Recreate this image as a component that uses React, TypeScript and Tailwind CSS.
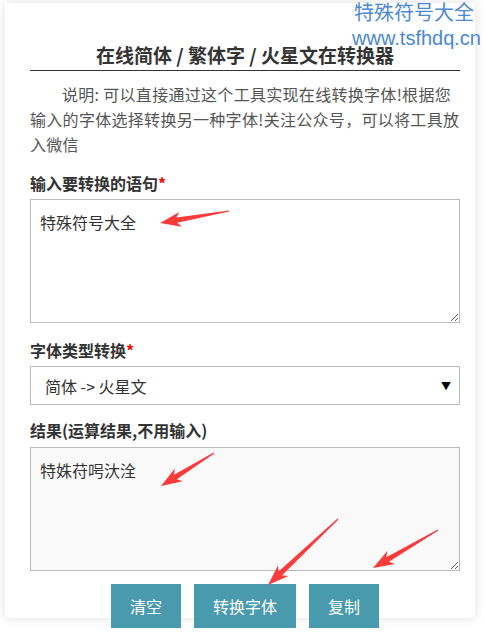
import React from 'react'

const cjk = "font-['Noto_Sans_CJK_SC',sans-serif]"

// red annotation arrow, tail -> tip
function Arrow({ tail, tip }: { tail: [number, number]; tip: [number, number] }) {
  const dx = tip[0] - tail[0]
  const dy = tip[1] - tail[1]
  const len = Math.hypot(dx, dy)
  const d = [dx / len, dy / len]
  const n = [-d[1], d[0]]
  const L = 19
  const at = (back: number, side: number) =>
    `${tip[0] - d[0] * back + n[0] * side},${tip[1] - d[1] * back + n[1] * side}`
  const pts = [
    `${tail[0] + n[0] * 0.6},${tail[1] + n[1] * 0.6}`,
    at(L - 2, 2.6),
    at(L + 2, 7.5),
    `${tip[0]},${tip[1]}`,
    at(L + 2, -7.5),
    at(L - 2, -2.6),
    `${tail[0] - n[0] * 0.6},${tail[1] - n[1] * 0.6}`,
  ].join(' ')
  return <polygon points={pts} fill="#fb3a3a" />
}

export default function App() {
  return (
    <div className={`relative w-[485px] h-[638px] bg-white overflow-hidden ${cjk}`}>
      {/* Card */}
      <div className="ml-[5px] mt-[3px] w-[470px] h-[615px] bg-white shadow-[0_0_10px_rgba(0,0,0,0.12)] pl-[25px] pr-[15px] pt-[38px]">
        {/* Title */}
        <h1 className="text-center text-[19px] leading-[28px] font-bold text-[#333] border-b border-[#333] pb-[1px]">
          在线简体 / 繁体字 / 火星文在转换器
        </h1>

        {/* Description */}
        <p className="mt-[11px] text-[16px] leading-[25px] text-[#555] indent-[32px] tracking-[0.3px]">
          说明: 可以直接通过这个工具实现在线转换字体!根据您
          <br />
          输入的字体选择转换另一种字体!关注公众号，可以将工具放
          <br />
          入微信
        </p>

        {/* Input */}
        <div className="mt-[14px] text-[16px] leading-[24px] font-bold text-[#333]">
          输入要转换的语句<span className="text-[#f00]">*</span>
        </div>
        <textarea
          readOnly
          defaultValue="特殊符号大全"
          className="mt-[4px] block w-full h-[124px] border border-[#bbb] bg-white px-[9px] pt-[10px] text-[16px] leading-[24px] text-[#333] outline-none"
        />

        {/* Select */}
        <div className="mt-[15px] text-[16px] leading-[24px] font-bold text-[#333]">
          字体类型转换<span className="text-[#f00]">*</span>
        </div>
        <div className="mt-[4px] h-[39px] border border-[#bbb] bg-white flex items-center justify-between pl-[14px] pr-[8px] text-[16px] text-[#333]">
          <span>简体 -&gt; 火星文</span>
          <span className="text-[10px] text-black">▼</span>
        </div>

        {/* Result */}
        <div className="mt-[13px] text-[16px] leading-[24px] font-bold text-[#333]">
          结果(运算结果,不用输入)
        </div>
        <textarea
          readOnly
          defaultValue="特姝苻呺汏洤"
          className="mt-[5px] block w-full h-[124px] border border-[#bbb] bg-[#f9f9f9] px-[9px] pt-[10px] text-[16px] leading-[24px] text-[#333] outline-none"
        />

        {/* Buttons */}
        <div className="mt-[13px] flex justify-center gap-[13px]">
          <button className="w-[70px] h-[44px] bg-[#4a9aad] text-white text-[16px]">清空</button>
          <button className="w-[102px] h-[44px] bg-[#4a9aad] text-white text-[16px]">转换字体</button>
          <button className="w-[70px] h-[44px] bg-[#4a9aad] text-white text-[16px]">复制</button>
        </div>
      </div>

      {/* Watermark */}
      <div className="absolute right-[11px] top-0 text-[#4a88d6] text-[20px] leading-[24px] text-right">
        特殊符号大全
      </div>
      <div className="absolute right-[4px] top-[26px] text-[#4a88d6] text-[20px] leading-[24px] font-['Liberation_Sans',sans-serif]">
        www.tsfhdq.cn
      </div>

      {/* Annotation arrows */}
      <svg className="absolute inset-0 pointer-events-none" width="485" height="638">
        <Arrow tail={[229, 211]} tip={[160, 223]} />
        <Arrow tail={[214, 453]} tip={[161, 486]} />
        <Arrow tail={[338, 519]} tip={[268, 585]} />
        <Arrow tail={[438, 530]} tip={[373, 568]} />
      </svg>
    </div>
  )
}
